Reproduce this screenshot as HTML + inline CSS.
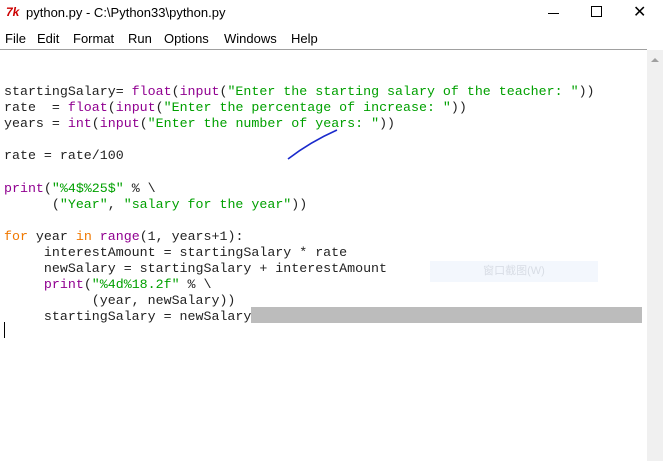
<!DOCTYPE html>
<html><head><style>
body{margin:0;width:663px;height:461px;background:#fff;position:relative;overflow:hidden;font-family:"Liberation Sans",sans-serif}
.t{position:absolute;left:26px;top:5px;font-size:13px;color:#000}
.ic{position:absolute;left:6px;top:5px;color:#c00;font-size:12px;font-weight:bold;font-style:italic}
.m span{position:absolute;top:31px;font-size:13px}
.sep{position:absolute;left:0;top:49px;width:647px;height:1px;background:#a0a0a0}
.sb{position:absolute;left:647px;top:50px;width:16px;height:411px;background:#f0f0f0}
pre{position:absolute;left:4px;top:84px;margin:0;font-family:"Liberation Mono",monospace;font-size:13.3px;line-height:16.1px;color:#222}
.k{color:#f07800}.b{color:#900090}.s{color:#00a000}
</style></head><body>
<div class="ic">7k</div>
<div class="t">python.py - C:\Python33\python.py</div>
<div style="position:absolute;left:548px;top:13px;width:11px;height:1px;background:#000"></div>
<div style="position:absolute;left:591px;top:6px;width:9px;height:9px;border:1px solid #000"></div>
<div style="position:absolute;left:633px;top:2px;font-size:16px">✕</div>
<div class="m"><span style="left:5px">File</span><span style="left:37px">Edit</span><span style="left:73px">Format</span><span style="left:128px">Run</span><span style="left:164px">Options</span><span style="left:224px">Windows</span><span style="left:291px">Help</span></div>
<div class="sep"></div>
<div class="sb"><div style="position:absolute;left:4px;top:8px;width:0;height:0;border-left:4px solid transparent;border-right:4px solid transparent;border-bottom:4px solid #a0a0a0"></div></div>
<div style="position:absolute;left:430px;top:261px;width:168px;height:21px;background:#f3f7fd;color:#d8dde5;font-size:11px;text-align:center;line-height:21px;font-family:'Liberation Sans','Noto Sans CJK SC',sans-serif">窗口截图(W)</div>
<div style="position:absolute;left:251px;top:307px;width:391px;height:16px;background:#bcbcbc"></div>
<div style="position:absolute;left:4px;top:322px;width:1px;height:16px;background:#000"></div>
<svg style="position:absolute;left:0;top:0" width="663" height="461"><path d="M288 159 Q310 142 337 130" stroke="#1a2acc" stroke-width="1.6" fill="none"/></svg>
<pre>startingSalary= <span class="b">float</span>(<span class="b">input</span>(<span class="s">"Enter the starting salary of the teacher: "</span>))
rate  = <span class="b">float</span>(<span class="b">input</span>(<span class="s">"Enter the percentage of increase: "</span>))
years = <span class="b">int</span>(<span class="b">input</span>(<span class="s">"Enter the number of years: "</span>))

rate = rate/100

<span class="b">print</span>(<span class="s">"%4$%25$"</span> % \
      (<span class="s">"Year"</span>, <span class="s">"salary for the year"</span>))

<span class="k">for</span> year <span class="k">in</span> <span class="b">range</span>(1, years+1):
     interestAmount = startingSalary * rate
     newSalary = startingSalary + interestAmount
     <span class="b">print</span>(<span class="s">"%4d%18.2f"</span> % \
           (year, newSalary))
     startingSalary = newSalary</pre>
</body></html>
